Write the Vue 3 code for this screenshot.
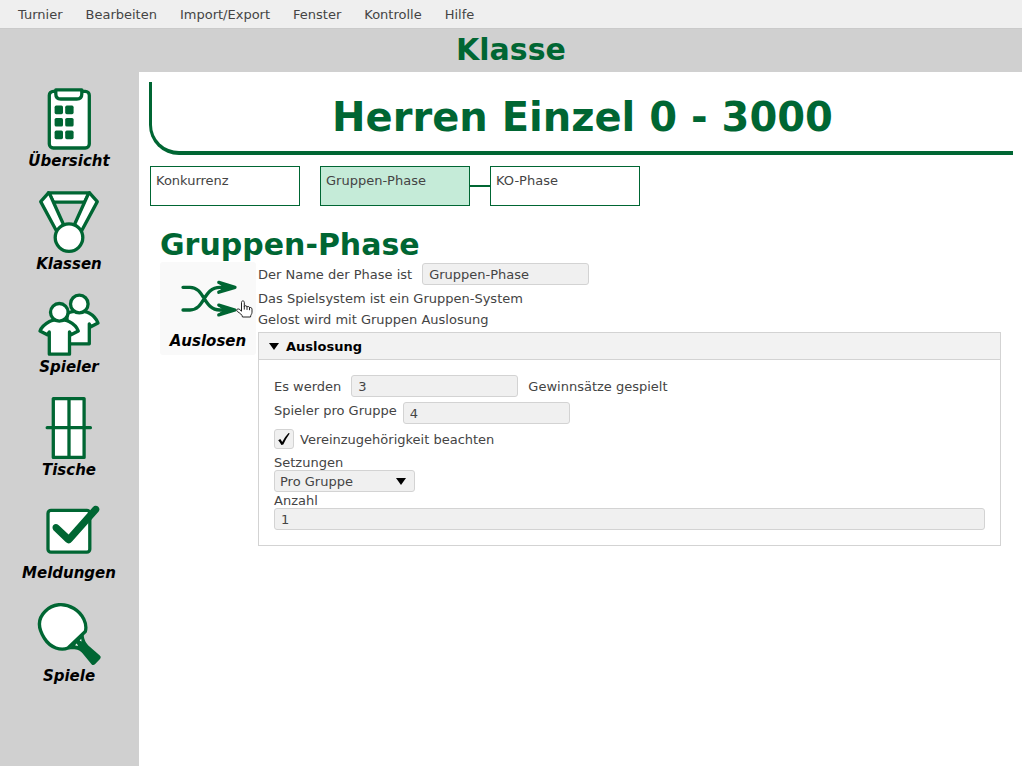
<script setup>
import { ref } from 'vue'

const menus = ['Turnier', 'Bearbeiten', 'Import/Export', 'Fenster', 'Kontrolle', 'Hilfe']

const views = [
  { id: 'overview', label: 'Übersicht' },
  { id: 'classes', label: 'Klassen' },
  { id: 'players', label: 'Spieler' },
  { id: 'tables', label: 'Tische' },
  { id: 'messages', label: 'Meldungen' },
  { id: 'games', label: 'Spiele' },
]

const phases = ['Konkurrenz', 'Gruppen-Phase', 'KO-Phase']
const activePhase = ref('Gruppen-Phase')

const phaseName = ref('Gruppen-Phase')
const sets = ref('3')
const groupSize = ref('4')
const respectClub = ref(true)
const seeding = ref('Pro Gruppe')
const seedCount = ref('1')
</script>

<template>
  <div class="app">
    <nav class="menubar">
      <button v-for="menu in menus" :key="menu" type="button">{{ menu }}</button>
    </nav>
    <header class="view-title"><h1>Klasse</h1></header>

    <div class="body">
      <nav class="sidebar">
        <button v-for="view in views" :key="view.id" type="button" class="tool">
          <svg v-if="view.id === 'overview'" class="icon" viewBox="0 0 64 64">
            <rect x="12.3" y="4.3" width="40" height="56.7" rx="4" />
            <path d="M18.8 2.8H44.8V7Q44.8 12 39.8 12H23.8Q18.8 12 18.8 7Z" />
            <g class="solid">
              <rect x="17.6" y="18.6" width="8.4" height="8.6" rx="1.6" />
              <rect x="28.2" y="18.6" width="8.4" height="8.6" rx="1.6" />
              <rect x="17.6" y="31" width="8.4" height="8.6" rx="1.6" />
              <rect x="28.2" y="31" width="8.4" height="8.6" rx="1.6" />
              <rect x="17.6" y="43.6" width="8.4" height="8.6" rx="1.6" />
              <rect x="28.2" y="43.6" width="8.4" height="8.6" rx="1.6" />
            </g>
          </svg>
          <svg v-else-if="view.id === 'classes'" class="icon" viewBox="0 0 64 64">
            <path d="M11.5 2.8H52.5L47.5 12.2H16.5Z" />
            <path d="M11.5 2.8L3.7 11.6L19.5 41L26.5 34.5L12.5 3.5Z" />
            <path d="M52.5 2.8L60.3 11.6L44.5 41L37.5 34.5L51.5 3.5Z" />
            <circle cx="32" cy="47.6" r="13.8" />
          </svg>
          <svg v-else-if="view.id === 'players'" class="icon" viewBox="0 0 64 64">
            <path d="M31 20C36 17.5 48 17.5 52 20C56.5 22.5 59.5 26 61 30L53.8 33.8L52.3 31V50.8H30V24Z" />
            <circle cx="42.3" cy="11" r="8.8" />
            <path d="M12.5 28.5C17 26 27.5 26 32 28.5C37 31 40 34.5 41.3 38L34 41.8L32.5 39V61.2H12.3V39L10.3 41.8L3 38C4.5 34 8 31 12.5 28.5Z" />
            <circle cx="22.3" cy="19.3" r="8.8" />
          </svg>
          <svg v-else-if="view.id === 'tables'" class="icon" viewBox="0 0 64 64">
            <rect x="16.3" y="2.6" width="30.8" height="58.8" />
            <path d="M32 2.6V61.4M10.2 31.7H53.4" />
          </svg>
          <svg v-else-if="view.id === 'messages'" class="icon" viewBox="0 0 64 64">
            <rect x="11" y="11.4" width="41.8" height="41.8" rx="3" />
            <path class="solid" d="M21.7 26.2L31.6 35.5L56 8C59 4.5 64.5 8.5 61.7 12.5L35 42.5Q32 46.2 28.7 43L17 31.7C13 27.5 17.8 22.8 21.7 26.2Z" />
          </svg>
          <svg v-else class="icon" viewBox="0 0 64 64">
            <path class="solid" d="M46.5 31.5C47 39 49.5 41.5 52.5 44.5L62.8 53.6Q64.5 55.2 63 57L58.2 62Q56.3 64 54.5 62.2L45.5 51.3C42.5 47.8 39.5 46.8 31.5 47.5Z" />
            <path d="M31 46C24 49 13.5 46 7.5 36.5C1 26.5 .5 17 8 9.5C15.5 1.5 27 .5 37 6.5C46 12 50.5 22 48.3 29.5Z" />
            <path class="notch" d="M42.7 38.5L44.2 36.8L44.5 39.6ZM38 43.2L39.8 41.4L41 43.9Z" />
          </svg>
          <span>{{ view.label }}</span>
        </button>
      </nav>

      <main>
        <h2 class="competition">Herren Einzel 0 - 3000</h2>

        <div class="phases">
          <button
            v-for="phase in phases"
            :key="phase"
            type="button"
            :class="{ active: phase === activePhase }"
            @click="activePhase = phase"
          >{{ phase }}</button>
        </div>

        <section class="phase">
          <h3>Gruppen-Phase</h3>
          <div class="phase-body">
            <button type="button" class="tool draw">
              <svg class="icon" viewBox="0 0 64 64">
                <path class="line" d="M7 20.3H14C29 20.3 27 43 44 43H50M7 43H14C29 43 27 20.3 44 20.3H50" />
                <path class="solid" d="M60 20.3L41.8 14.2Q42.5 17.5 48 20.3Q42.5 23 41.8 26.4Z" />
                <path class="solid" d="M60 43L41.8 36.9Q42.5 40.2 48 43Q42.5 45.7 41.8 49.1Z" />
                <path class="line" d="M42.8 15.4L59 20.3L42.8 25.2M42.8 38.1L59 43L42.8 47.9" />
              </svg>
              <span>Auslosen</span>
              <svg class="pointer" viewBox="0 0 17 18">
                <path d="M5.5 10.8V2.4C5.5.4 8.3.4 8.3 2.4V6.6C8.7 5.3 11 5.5 11 7C11.6 6 13.5 6.4 13.5 7.8C14.3 7.1 16 7.6 16 9.2V12.2C16 14.2 14.7 14.5 14.5 17H6.5C6.2 14.5 3.8 13.2 1.4 11.5C-.1 10.4 1 8.4 2.8 9Z" />
                <path d="M8.3 6.5V9.2M11 7V9.5M13.5 7.8V9.8" />
              </svg>
            </button>

            <div class="settings">
              <div class="row">
                <label for="phase-name">Der Name der Phase ist</label>
                <input id="phase-name" v-model="phaseName" type="text" />
              </div>
              <div class="facts">
                <p>Das Spielsystem ist ein Gruppen-System</p>
                <p>Gelost wird mit Gruppen Auslosung</p>
              </div>

              <details open class="panel">
                <summary>
                  <svg viewBox="0 0 10 7"><path d="M0 0H10L5 7Z" /></svg>
                  Auslosung
                </summary>
                <div class="fields">
                  <div class="row">
                    <label for="sets">Es werden</label>
                    <input id="sets" v-model="sets" type="text" />
                    <span>Gewinnsätze gespielt</span>
                  </div>
                  <div class="row stacked">
                    <label for="group-size">Spieler pro Gruppe</label>
                    <input id="group-size" v-model="groupSize" type="text" />
                  </div>
                  <label class="check">
                    <input v-model="respectClub" type="checkbox" />
                    <svg v-if="respectClub" viewBox="0 0 20 20">
                      <path d="M4.2 11.3L6.3 10Q7.4 11.3 8.2 13Q11 7.5 14.6 4L15.7 4.5Q12 9.5 9.3 15.5L7.4 16Q6 13.2 4.2 11.3Z" />
                    </svg>
                    <span>Vereinzugehörigkeit beachten</span>
                  </label>
                  <div class="field">
                    <label for="seeding">Setzungen</label>
                    <div class="select">
                      <select id="seeding" v-model="seeding">
                        <option>Pro Gruppe</option>
                        <option>Gesamt</option>
                      </select>
                      <svg viewBox="0 0 10 7"><path d="M0 0H10L5 7Z" /></svg>
                    </div>
                    <label for="seed-count">Anzahl</label>
                    <input id="seed-count" v-model="seedCount" type="text" />
                  </div>
                </div>
              </details>
            </div>
          </div>
        </section>
      </main>
    </div>
  </div>
</template>

<style>
body {
  margin: 0;
}
</style>

<style scoped>
.app {
  --green: #006633;
  --line: #d3d3d3;
  --field: #f0f0f0;
  display: flex;
  flex-direction: column;
  min-height: 100vh;
  background: #fff;
  color: #444;
  font: 13px/16px "DejaVu Sans", sans-serif;
}

.app * {
  box-sizing: border-box;
}

button,
input,
select {
  margin: 0;
  border: 0;
  background: none;
  color: inherit;
  font: inherit;
}

h1,
h2,
h3,
p {
  margin: 0;
}

h1,
h2,
h3 {
  color: var(--green);
  font-weight: bold;
}

.menubar {
  display: flex;
  gap: 23px;
  padding: 6px 18px 5px;
  background: #efefef;
  line-height: 17px;
}

.menubar button {
  padding: 0;
}

.view-title {
  padding: 3px 0 4px;
  border-top: 1px solid #cacaca;
  background: #d0d0d0;
  text-align: center;
}

.view-title h1 {
  font-size: 30px;
  line-height: 36px;
}

.body {
  display: flex;
  flex: 1;
}

.sidebar {
  display: flex;
  flex: 0 0 139px;
  flex-direction: column;
  align-items: center;
  gap: 10px;
  padding: 10px 1px 10px 0;
  background: #d0d0d0;
}

.tool {
  display: flex;
  flex-direction: column;
  align-items: center;
  padding: 5px 0 4px;
  color: #000;
  font: italic bold 15px/20px "DejaVu Sans", sans-serif;
}

.icon {
  width: 64px;
  height: 64px;
  fill: #fff;
  stroke: var(--green);
  stroke-width: 3.3;
  stroke-linecap: round;
  stroke-linejoin: round;
}

.icon .solid {
  fill: var(--green);
  stroke: none;
}

.icon .notch {
  stroke: none;
}

.icon .line {
  fill: none;
}

main {
  flex: 1;
  min-width: 0;
  padding: 10px 9px 10px 10px;
}

.competition {
  padding: 11px 0 10px;
  border-bottom: 4px solid var(--green);
  border-left: 3px solid var(--green);
  border-bottom-left-radius: 30px;
  font-size: 40px;
  line-height: 48px;
  text-align: center;
}

.phases {
  display: flex;
  gap: 20px;
  padding: 11px 1px 0;
}

.phases button {
  position: relative;
  display: flex;
  width: 150px;
  height: 40px;
  padding: 6px 5px;
  border: 1px solid var(--green);
}

.phases .active {
  background: #c5ebd8;
}

.phases button:last-child::before {
  position: absolute;
  top: 18px;
  right: 100%;
  width: 21px;
  height: 2px;
  background: var(--green);
  content: "";
}

.phase {
  padding: 21px 12px 0 11px;
}

.phase h3 {
  font-size: 30px;
  line-height: 35px;
}

.phase-body {
  display: flex;
  align-items: flex-start;
  gap: 2px;
}

.draw {
  position: relative;
  flex: 0 0 96px;
  border-radius: 3px;
  background: #f9f9f9;
}

.pointer {
  position: absolute;
  top: 38px;
  left: 76px;
  width: 17px;
  height: 18px;
  overflow: visible;
  fill: #fff;
  stroke: #222;
  stroke-linecap: round;
  stroke-linejoin: round;
}

.settings {
  flex: 1;
  min-width: 0;
  padding-top: 1px;
}

.row {
  display: flex;
  align-items: flex-start;
  gap: 10px;
}

.row label,
.row span {
  padding-top: 4px;
  line-height: 15px;
}

.row.stacked {
  gap: 6px;
}

.row.stacked label {
  padding-top: 1px;
}

.facts {
  padding: 3px 0 2px;
  line-height: 21px;
}

input[type="text"] {
  width: 167px;
  height: 22px;
  padding: 0 6px;
  border: 1px solid var(--line);
  border-radius: 3px;
  background: var(--field);
}

.panel {
  border: 1px solid var(--line);
}

summary {
  display: flex;
  align-items: center;
  gap: 7px;
  padding: 5px 10px 4px;
  border-bottom: 1px solid var(--line);
  background: #f2f2f2;
  color: #000;
  font-weight: bold;
  line-height: 17px;
  list-style: none;
}

summary svg,
.select svg {
  width: 10px;
  height: 7px;
  fill: #000;
}

.fields {
  display: flex;
  flex-direction: column;
  gap: 5px;
  padding: 15px;
}

.check {
  position: relative;
  display: flex;
  align-self: flex-start;
  gap: 6px;
}

.check span {
  padding-top: 3px;
  line-height: 15px;
}

.check input {
  width: 20px;
  height: 20px;
  border: 1px solid var(--line);
  border-radius: 3px;
  background: var(--field);
  appearance: none;
}

.check svg {
  position: absolute;
  top: 0;
  left: 0;
  width: 20px;
  height: 20px;
  pointer-events: none;
}

.field {
  display: flex;
  flex-direction: column;
  align-items: flex-start;
}

.field label {
  padding-top: 1px;
  line-height: 15px;
}

.field input[type="text"] {
  width: 100%;
}

.select {
  position: relative;
  width: 141px;
}

.select select {
  display: block;
  width: 100%;
  height: 22px;
  padding: 1px 5px 0;
  border: 1px solid var(--line);
  border-radius: 3px;
  background: var(--field);
  appearance: none;
}

.select svg {
  position: absolute;
  top: 8px;
  right: 9px;
  pointer-events: none;
}
</style>
